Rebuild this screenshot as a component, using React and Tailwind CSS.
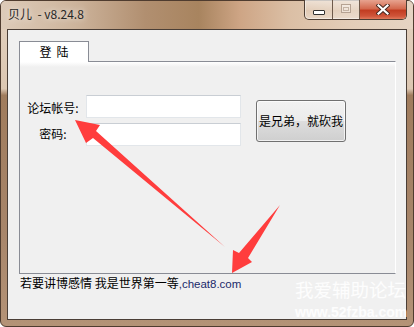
import React from 'react';

const CJK = "font-['Noto_Sans_CJK_SC','Noto_Sans_CJK_JP',sans-serif]";

function CaptionButtons() {
  return (
    <div className="flex h-[20px] -mt-[1px] mr-[6px] rounded-b-[5px] border border-t-0 border-[#4e3e33] overflow-hidden shadow-[inset_0_0_0_1px_rgba(255,255,255,0.45)]">
      <div className="w-[28px] flex items-center justify-center border-r border-[#6e5a4b] bg-[linear-gradient(to_bottom,rgba(255,255,255,0.5),rgba(255,255,255,0.2)_50%,rgba(255,255,255,0.1)_51%,rgba(255,255,255,0.3))]">
        <div className="mt-[6px] w-[12px] h-[5px] bg-white border border-[#303030] rounded-[1px]" />
      </div>
      <div className="w-[27px] flex items-center justify-center border-r border-[#6e5a4b] bg-[linear-gradient(to_bottom,rgba(255,255,255,0.5),rgba(255,255,255,0.2)_50%,rgba(255,255,255,0.1)_51%,rgba(255,255,255,0.3))]">
        <div className="-mt-[2px] w-[10px] h-[9px] border border-[#b5a292] bg-[rgba(255,255,255,0.35)] flex items-center justify-center">
          <div className="w-[6px] h-[4px] border border-[#c4b3a4]" />
        </div>
      </div>
      <div className="w-[46px] flex items-center justify-center bg-[linear-gradient(to_bottom,#e7a38f_0%,#d46a4f_45%,#c23d22_55%,#d0553a_85%,#e07a5c_100%)]">
        <svg width="14" height="11" viewBox="0 0 14 11" className="-mt-[1px]">
          <path d="M2.5 1.5 L11.5 9.5 M11.5 1.5 L2.5 9.5" stroke="#4a2a22" strokeWidth="4.2" strokeLinecap="square" />
          <path d="M2.5 1.5 L11.5 9.5 M11.5 1.5 L2.5 9.5" stroke="#ffffff" strokeWidth="2.2" strokeLinecap="square" />
        </svg>
      </div>
    </div>
  );
}

function Arrows() {
  return (
    <svg className="absolute inset-0 pointer-events-none" width="414" height="327" viewBox="0 0 414 327">
      <polygon points="75,120 100,125 96,131 225,247 93,138 86,143" fill="#ff3d3d" />
      <polygon points="280,205 248,258 252,262 232,273 233,250 239,253" fill="#ff3d3d" />
    </svg>
  );
}

export default function App() {
  return (
    <div className={`relative w-[414px] h-[327px] overflow-hidden ${CJK}`}>
      <div className="flex flex-col w-full h-full rounded-[6px] border border-[#4f3c2f] bg-[linear-gradient(to_bottom,#e3d1bf_0%,#dcc7b2_27%,#a07c5d_29%,#a7856a_70%,#b49377_100%)]">
        {/* title bar */}
        <div className="flex h-[28px] shrink-0 rounded-t-[5px] bg-[linear-gradient(to_right,#ddcbb9_0%,#cdb49c_18%,#b18f70_35%,#a8845f_48%,#cea585_58%,#dbbfa5_70%,#e3cdb8_85%,#e6d4c3_100%)]">
          <div className="pl-[7px] pt-[5px] text-[12px] leading-[16px] text-[#262626] whitespace-pre [text-shadow:0_0_6px_rgba(255,255,255,0.9)]">
            贝儿  - v8.24.8
          </div>
          <div className="ml-auto">
            <CaptionButtons />
          </div>
        </div>

        {/* client area */}
        <div className="mx-[6px] h-[291px] shrink-0 border border-[#4a3e36] bg-[#f0f0f0] pl-[11px] pt-[11px]">
          <div className="relative z-10 -mb-[1px] w-[70px] h-[21px] border border-b-0 border-[#898c95] bg-white flex items-center justify-center gap-[5px] text-[12px] leading-[14px] text-black">
            <span>登</span>
            <span>陆</span>
          </div>
          <div className="w-[377px] h-[213px] border border-[#898c95] border-r-white bg-[linear-gradient(to_bottom,#ffffff_0px,#f0f0f0_5px)] pt-[33px]">
            <div className="flex items-center">
              <div className="flex flex-col gap-[5px]">
                <div className="flex items-center h-[23px]">
                  <div className="w-[66px] pt-[2px] text-center text-[12px] leading-[14px] text-black">论坛帐号:</div>
                  <div className="w-[155px] h-[23px] bg-white border border-[#e2e6ea] border-t-[#c9ced4]" />
                </div>
                <div className="flex items-center h-[23px]">
                  <div className="w-[66px] pb-[2px] text-center text-[12px] leading-[14px] text-black">密码:</div>
                  <div className="w-[155px] h-[23px] bg-white border border-[#e2e6ea] border-t-[#c9ced4]" />
                </div>
              </div>
              <button className="ml-[15px] w-[90px] h-[42px] rounded-[3px] border border-[#707070] bg-[linear-gradient(to_bottom,#f2f2f2_0%,#ebebeb_50%,#dddddd_51%,#cfcfcf_100%)] shadow-[inset_0_0_0_1px_rgba(255,255,255,0.7)] text-[12px] leading-[14px] text-black flex items-center justify-center">
                是兄弟，就砍我
              </button>
            </div>
          </div>
          <div className="mt-[2px] ml-[1px] text-[12px] leading-[14px] text-black whitespace-pre">
            若要讲博感情 我是世界第一等<span className="font-['Liberation_Sans',sans-serif] text-[11.5px] text-[#1b2a6b]">,cheat8.com</span>
          </div>
        </div>
      </div>

      {/* watermark */}
      <div className="absolute left-[295px] top-[279px] flex flex-col items-start text-white/85 pointer-events-none">
        <div className="text-[18.5px] leading-[20px]">我爱辅助论坛</div>
        <div className="mt-[6px] font-['Liberation_Sans',sans-serif] font-bold text-[14px] leading-[14px]">www.52fzba.com</div>
      </div>

      <Arrows />
    </div>
  );
}
